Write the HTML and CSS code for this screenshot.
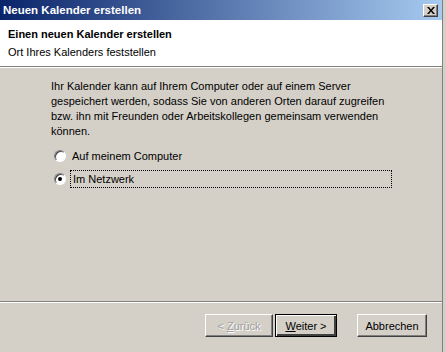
FILE: index.html
```html
<!DOCTYPE html>
<html lang="de">
<head>
    <meta charset="UTF-8">
    <title>Neuen Kalender erstellen</title>
    <link rel="stylesheet" href="styles.css">
</head>
<body>

<div class="window">
    <div class="titlebar">
        <span class="title">Neuen Kalender erstellen</span>
        <button type="button" class="close">
            <svg width="8" height="7" viewBox="0 0 8 7"><path d="M0 0h2l2 2.5L6 0h2L5 3.5 8 7H6L4 4.5 2 7H0l3-3.5z" fill="#000"/></svg>
        </button>
    </div>

    <div class="header">
        <div class="header-title">Einen neuen Kalender erstellen</div>
        <div class="header-sub">Ort Ihres Kalenders feststellen</div>
    </div>

    <div class="content">
        <p class="intro">Ihr Kalender kann auf Ihrem Computer oder auf einem Server gespeichert werden, sodass Sie von anderen Orten darauf zugreifen bzw. ihn mit Freunden oder Arbeitskollegen gemeinsam verwenden können.</p>

        <div class="option">
            <span class="radio"></span>
            <span class="option-label">Auf meinem Computer</span>
        </div>
        <div class="option">
            <span class="radio checked"></span>
            <span class="option-label focused">Im Netzwerk</span>
        </div>
    </div>

    <div class="footer">
        <button type="button" class="btn back">&lt; <u>Z</u>urück</button>
        <button type="button" class="btn next"><u>W</u>eiter &gt;</button>
        <button type="button" class="btn cancel">Abbrechen</button>
    </div>
</div>

</body>
</html>
```

FILE: styles.css
```css
* {
    box-sizing: border-box;
}

body {
    margin: 0;
    background-color: #d4d0c8;
    font-family: "Liberation Sans", Arial, sans-serif;
    font-size: 11px;
    color: #000;
}

.window {
    width: 443px;
    height: 352px;
    display: flex;
    flex-direction: column;
    background-color: #d4d0c8;
    border-right: 1px solid #808080;
}

.titlebar {
    height: 20px;
    display: flex;
    align-items: center;
    justify-content: space-between;
    padding: 0 4px 0 3px;
    background: linear-gradient(to right, #0a246a, #a6caf0);
}

.title {
    color: #fff;
    font-weight: bold;
    font-size: 11.5px;
}

.close {
    width: 15px;
    height: 13px;
    padding: 0;
    display: flex;
    align-items: center;
    justify-content: center;
    background-color: #d4d0c8;
    border: 1px solid;
    border-color: #fff #404040 #404040 #fff;
    box-shadow: inset -1px -1px 0 #808080;
}

.header {
    height: 47px;
    background-color: #fff;
    padding: 0 8px;
    border-bottom: 1px solid #808080;
    box-shadow: 0 1px 0 #fff;
}

.header-title {
    font-weight: bold;
    font-size: 11px;
    margin-top: 8px;
    line-height: 13px;
}

.header-sub {
    margin-top: 5px;
    line-height: 13px;
}

.content {
    flex: 1;
    padding: 12px 0 0 51px;
}

.intro {
    margin: 0 0 8px 0;
    width: 340px;
    line-height: 15px;
}

.option {
    display: flex;
    align-items: center;
    height: 18px;
    margin-bottom: 5px;
    margin-left: 3px;
}

.radio {
    width: 12px;
    height: 12px;
    border-radius: 50%;
    background-color: #fff;
    border: 1px solid;
    border-color: #808080 #fff #fff #808080;
    box-shadow: inset 1px 1px 0 #404040;
    position: relative;
    margin-right: 4px;
}

.radio.checked::after {
    content: "";
    position: absolute;
    left: 3px;
    top: 3px;
    width: 4px;
    height: 4px;
    border-radius: 50%;
    background-color: #000;
}

.option-label {
    line-height: 16px;
    padding: 0 2px;
}

.option-label.focused {
    width: 322px;
    height: 18px;
    border: 1px dotted #000;
}

.footer {
    height: 51px;
    display: flex;
    align-items: flex-start;
    padding: 12px 15px 0 0;
    justify-content: flex-end;
    border-top: 1px solid #808080;
    box-shadow: inset 0 1px 0 #fff;
}

.btn {
    width: 69px;
    height: 23px;
    padding: 0;
    font-family: "Liberation Sans", Arial, sans-serif;
    font-size: 11px;
    color: #000;
    background-color: #d4d0c8;
    border: 1px solid;
    border-color: #fff #404040 #404040 #fff;
    box-shadow: inset -1px -1px 0 #808080;
}

.btn.back {
    width: 68px;
    color: #a0a0a0;
    text-shadow: 1px 1px 0 #fff;
}

.btn.next {
    width: 62px;
    margin-left: 2px;
    border: 1px solid #000;
    box-shadow: inset 1px 1px 0 #fff, inset -2px -2px 0 #404040;
}

.btn.cancel {
    width: 70px;
    margin-left: 20px;
}
```
